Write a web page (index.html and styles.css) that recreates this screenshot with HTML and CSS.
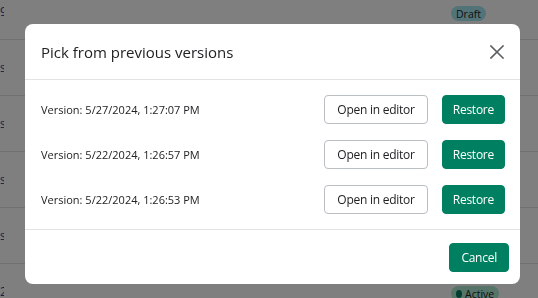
FILE: index.html
```html
<!DOCTYPE html>
<html lang="en">
<head>
<meta charset="utf-8">
<title>Pick from previous versions</title>
<link rel="stylesheet" href="styles.css">
</head>
<body>
<div class="page">
  <div class="list">
    <div class="row"><span class="name">9</span><span class="status"><span class="badge badge-info">Draft</span></span></div>
    <div class="row"><span class="name">s</span><span class="status"></span></div>
    <div class="row"><span class="name">s</span><span class="status"></span></div>
    <div class="row"><span class="name">s</span><span class="status"></span></div>
    <div class="row"><span class="name">s</span><span class="status"></span></div>
    <div class="row"><span class="name">2</span><span class="status"><span class="badge badge-success"><span class="dot"></span>Active</span></span></div>
  </div>
</div>
<div class="backdrop">
  <div class="modal">
    <div class="modal-header">
      <h2 class="modal-title">Pick from previous versions</h2>
      <button class="close" aria-label="Close">
        <svg width="14" height="14" viewBox="0 0 14 14"><path d="M1 1L13 13M13 1L1 13" stroke="#5c5f62" stroke-width="1.6" fill="none" stroke-linecap="square"/></svg>
      </button>
    </div>
    <div class="modal-body">
      <div class="version">
        <span class="version-label">Version: 5/27/2024, 1:27:07 PM</span>
        <div class="actions"><button class="btn">Open in editor</button><button class="btn btn-primary">Restore</button></div>
      </div>
      <div class="version">
        <span class="version-label">Version: 5/22/2024, 1:26:57 PM</span>
        <div class="actions"><button class="btn">Open in editor</button><button class="btn btn-primary">Restore</button></div>
      </div>
      <div class="version">
        <span class="version-label">Version: 5/22/2024, 1:26:53 PM</span>
        <div class="actions"><button class="btn">Open in editor</button><button class="btn btn-primary">Restore</button></div>
      </div>
    </div>
    <div class="modal-footer">
      <button class="btn btn-primary btn-cancel">Cancel</button>
    </div>
  </div>
</div>
</body>
</html>
```
FILE: styles.css
```css
* { box-sizing: border-box; }
html, body { margin: 0; padding: 0; }
body {
  width: 538px;
  height: 298px;
  overflow: hidden;
  background: #f6f6f7;
  font-family: "Segoe UI", "Open Sans", "Noto Sans", sans-serif;
  color: #202223;
}
.page { background: #fff; height: 298px; overflow: hidden; }
.list { margin-top: -16px; }
.row {
  height: 56px;
  border-bottom: 1px solid #e1e3e5;
  display: grid;
  grid-template-columns: 1fr 87px;
  align-items: center;
}
.name { font-size: 12px; color: #2a3b8f; line-height: 14px; width: 4px; overflow: hidden; }
.badge {
  display: inline-flex;
  align-items: center;
  gap: 3px;
  height: 15px;
  padding: 0 5px;
  border-radius: 8px;
  font-size: 10.5px;
  color: #202223;
}
.badge-info { background: #a4e8f2; }
.badge-success { background: #aee9d1; padding-left: 5px; }
.dot { width: 6px; height: 8px; border-radius: 50%; background: #007f5f; }
.row:first-child .badge { margin-top: -1px; }

.backdrop {
  position: fixed;
  inset: 0;
  background: rgba(0, 0, 0, 0.5);
  padding: 24px 0 0 25px;
}
.modal {
  width: 495px;
  height: 260px;
  background: #fff;
  border-radius: 8px;
  display: flex;
  flex-direction: column;
  overflow: hidden;
}
.modal-header {
  height: 56px;
  border-bottom: 1px solid #e1e3e5;
  display: flex;
  align-items: center;
  justify-content: space-between;
  padding: 0 16px 0 16px;
}
.modal-title {
  margin: 0;
  font-size: 15px;
  font-weight: 400;
  line-height: 20px;
}
.close {
  border: 0;
  background: none;
  padding: 0;
  width: 14px;
  height: 14px;
  display: flex;
}
.modal-body {
  padding: 15px 15px 15px 16px;
  display: flex;
  flex-direction: column;
  gap: 16px;
  border-bottom: 1px solid #e1e3e5;
}
.version {
  display: flex;
  align-items: center;
  justify-content: space-between;
  height: 29px;
}
.version-label { font-size: 11px; }
.actions { display: flex; gap: 14px; }
.btn {
  height: 29px;
  padding: 0 12px;
  border: 1px solid #babfc3;
  border-radius: 4px;
  background: #fff;
  font-family: inherit;
  font-size: 12px;
  letter-spacing: -0.25px;
  color: #202223;
}
.btn-primary {
  background: #008060;
  border-color: #008060;
  color: #fff;
  padding: 0 10px;
}
.btn-cancel { padding: 0 11px; }
.modal-footer {
  flex: 1;
  display: flex;
  justify-content: flex-end;
  padding: 13px 11px 0 0;
}
```
